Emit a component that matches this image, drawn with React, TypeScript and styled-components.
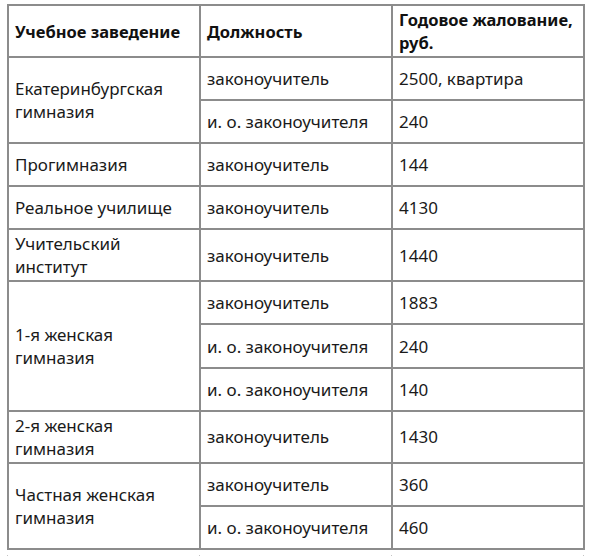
import React from "react";
import styled, { createGlobalStyle } from "styled-components";

const Global = createGlobalStyle`
  html, body { margin: 0; padding: 0; background: #ffffff; }
  body { font-family: "Noto Sans", "Open Sans", sans-serif; color: #1a1a1a; }
`;

const Page = styled.div`
  padding: 4px 0 0 7px;
  width: 591px;
  box-sizing: border-box;
`;

const Table = styled.table`
  border-collapse: collapse;
  width: 578px;
  table-layout: fixed;
  font-size: 17px;
  line-height: 23px;
`;

const Row = styled.tr<{ $tall?: boolean }>`
  height: ${(p) => (p.$tall ? "52px" : "43.1px")};
`;

const Th = styled.th`
  border: 2px solid #8c8c8c;
  padding: 1px 8px 1px 6px;
  text-align: left;
  vertical-align: middle;
  font-weight: 700;
  font-size: 16.5px;
  color: #111;
`;

const Td = styled.td`
  border: 2px solid #8c8c8c;
  padding: 1px 8px 1px 6px;
  text-align: left;
  vertical-align: middle;
  font-weight: 400;
`;

const NextTableEdge = styled.div`
  display: grid;
  grid-template-columns: 192px 192px 192px 2px;
  width: 578px;
  height: 6px;
  margin-top: 3px;
`;

const EdgeStub = styled.div`
  border-left: 1px solid #c4c4c4;
  height: 4px;
  margin-top: 2px;
`;

type Group = {
  school: string;
  tall?: boolean;
  rows: [string, string][];
};

const groups: Group[] = [
  {
    school: "Екатеринбургская гимназия",
    rows: [
      ["законоучитель", "2500, квартира"],
      ["и. о. законоучителя", "240"],
    ],
  },
  { school: "Прогимназия", rows: [["законоучитель", "144"]] },
  { school: "Реальное училище", rows: [["законоучитель", "4130"]] },
  { school: "Учительский институт", tall: true, rows: [["законоучитель", "1440"]] },
  {
    school: "1-я женская гимназия",
    rows: [
      ["законоучитель", "1883"],
      ["и. о. законоучителя", "240"],
      ["и. о. законоучителя", "140"],
    ],
  },
  { school: "2-я женская гимназия", tall: true, rows: [["законоучитель", "1430"]] },
  {
    school: "Частная женская гимназия",
    rows: [
      ["законоучитель", "360"],
      ["и. о. законоучителя", "460"],
    ],
  },
];

export default function App() {
  return (
    <Page>
      <Global />
      <Table>
        <colgroup>
          <col style={{ width: "192px" }} />
          <col style={{ width: "192px" }} />
          <col />
        </colgroup>
        <thead>
          <Row $tall>
            <Th>Учебное заведение</Th>
            <Th>Должность</Th>
            <Th>Годовое жалование, руб.</Th>
          </Row>
        </thead>
        <tbody>
          {groups.map((g) =>
            g.rows.map((r, i) => (
              <Row key={g.school + i} $tall={g.tall}>
                {i === 0 && <Td rowSpan={g.rows.length}>{g.school}</Td>}
                <Td>{r[0]}</Td>
                <Td>{r[1]}</Td>
              </Row>
            ))
          )}
        </tbody>
      </Table>
      <NextTableEdge>
        <EdgeStub />
        <EdgeStub />
        <EdgeStub />
        <EdgeStub />
      </NextTableEdge>
    </Page>
  );
}
